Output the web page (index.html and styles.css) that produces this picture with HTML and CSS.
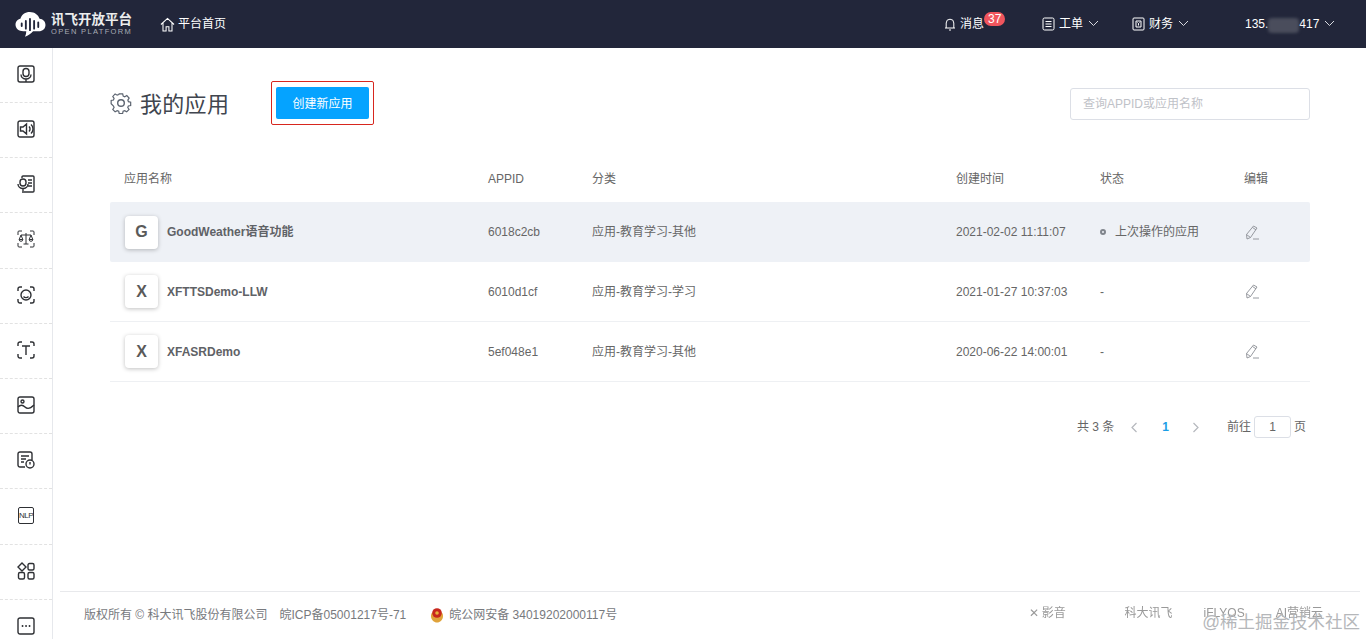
FILE: index.html
```html
<!DOCTYPE html>
<html lang="zh-CN">
<head>
    <meta charset="UTF-8">
    <meta name="viewport" content="width=device-width, initial-scale=1.0">
    <title>我的应用 - 讯飞开放平台</title>
    <link rel="stylesheet" href="styles.css">
</head>
<body>
    <header class="topbar">
        <div class="logo">
            <svg class="logo-icon" width="31" height="27" viewBox="0 0 30 26">
                <path fill="#fff" d="M8 19.500C3.800 19.500 .5 17 .5 13.300c0-3 2.100-5.300 4.700-5.800C6.300 3.300 10 .8 14.300.8c4.600 0 8.300 2.700 9.500 6.700 3.300.2 5.700 2.700 5.700 5.900 0 3.600-2.800 6.100-6.500 6.100h-5.500c-2.200 2.500-4.800 4.300-7.800 5.300.8-1.700 1.200-3.500 1.200-5.300z"/>
                <g stroke="#22263a" stroke-width="1.800" stroke-linecap="round">
                    <path d="M6.500 12v2.500M10.500 9.500v7.500M14.500 7.500v11M18.500 9.500v7.500M22.500 11v4.500"/>
                </g>
            </svg>
            <div class="logo-text">
                <div class="logo-cn">讯飞开放平台</div>
                <div class="logo-en">OPEN PLATFORM</div>
            </div>
        </div>
        <a class="nav-home">
            <svg width="15" height="15" viewBox="0 0 16 16" fill="none" stroke="#fff" stroke-width="1.100">
                <path d="M1 8l7-6.500L15 8M3.200 6.500V15h3.300v-4.500h3V15h3.300V6.500"/>
            </svg>
            平台首页
        </a>
        <div class="nav-right">
            <a class="nav-item nav-msg">
                <svg width="12" height="14" viewBox="0 0 12 14" fill="none" stroke="#fff" stroke-width="1">
                    <path d="M1 11h10M2.200 11V6a3.800 3.800 0 0 1 7.600 0v5M5 13h2"/>
                </svg>
                消息
                <span class="badge">37</span>
            </a>
            <a class="nav-item nav-order">
                <svg width="13" height="14" viewBox="0 0 13 14" fill="none" stroke="#fff" stroke-width="1">
                    <rect x="1" y="1" width="11" height="12" rx="1.500"/>
                    <path d="M3.500 4.500h6M3.500 7h6M3.500 9.500h6"/>
                </svg>
                工单
                <svg class="caret" width="11" height="7" viewBox="0 0 11 7"><path d="M1 1l4.500 4.500L10 1"/></svg>
            </a>
            <a class="nav-item nav-money">
                <svg width="13" height="14" viewBox="0 0 13 14" fill="none" stroke="#fff" stroke-width="1">
                    <rect x="1" y="1" width="11" height="12" rx="1"/>
                    <path d="M4 4h5v6H4z"/>
                    <path d="M5.500 5.500l1 1 1-1M6.500 6.500v2"/>
                </svg>
                财务
                <svg class="caret" width="11" height="7" viewBox="0 0 11 7"><path d="M1 1l4.500 4.500L10 1"/></svg>
            </a>
            <a class="nav-item nav-user">
                <span>135.</span><span class="mask"></span><span>417</span>
                <svg class="caret" width="11" height="7" viewBox="0 0 11 7"><path d="M1 1l4.500 4.500L10 1"/></svg>
            </a>
        </div>
    </header>

    <div class="layout">
        <aside class="sidebar">
            <a class="side-item">
                <svg class="side-icon" viewBox="0 0 18 18">
                    <path d="M1 6V3a2 2 0 0 1 2-2h12a2 2 0 0 1 2 2v3M1 12v3a2 2 0 0 0 2 2h12a2 2 0 0 0 2-2v-3M1 6v6M17 6v6"/>
                    <rect x="6" y="3.500" width="6" height="8" rx="3"/>
                    <path d="M4 9.500a5 4.500 0 0 0 10 0M9 14v3"/>
                </svg>
            </a>
            <a class="side-item">
                <svg class="side-icon" viewBox="0 0 18 18">
                    <rect x="1" y="1" width="16" height="16" rx="2"/>
                    <path d="M3.500 7v4h2.500l3.500 3V4L6 7zM12 6.500a3.500 3.500 0 0 1 0 5M14 4.500a6 6 0 0 1 0 9"/>
                </svg>
            </a>
            <a class="side-item">
                <svg class="side-icon" viewBox="0 0 18 18">
                    <path d="M5 3V2a1 1 0 0 1 1-1h10a1 1 0 0 1 1 1v14a1 1 0 0 1-1 1H5M11 5h4M11 8h4M11 11h4"/>
                    <rect x="3" y="4" width="6" height="7" rx="3"/>
                    <path d="M1 9a5 4.500 0 0 0 10 0M6 13.500V16"/>
                </svg>
            </a>
            <a class="side-item">
                <svg class="side-icon side-thin" viewBox="0 0 18 18">
                    <path d="M1 5V2a1 1 0 0 1 1-1h3M13 1h3a1 1 0 0 1 1 1v3M17 13v3a1 1 0 0 1-1 1h-3M5 17H2a1 1 0 0 1-1-1v-3"/>
                    <path d="M9 3v11M6.500 14h5M4 5h10M4 5l-1.800 4.500h3.600zM14 5l-1.800 4.500h3.600z"/>
                    <path d="M2.200 9.500a1.800 1.800 0 0 0 3.600 0M12.200 9.500a1.800 1.800 0 0 0 3.600 0"/>
                </svg>
            </a>
            <a class="side-item">
                <svg class="side-icon" viewBox="0 0 18 18">
                    <path d="M1 5V3a2 2 0 0 1 2-2h2M13 1h2a2 2 0 0 1 2 2v2M17 13v2a2 2 0 0 1-2 2h-2M5 17H3a2 2 0 0 1-2-2v-2"/>
                    <circle cx="9" cy="9" r="5"/>
                    <path d="M6.800 7.500h.1M11.100 7.500h.1M6.500 10.500c1.200 1.500 3.800 1.500 5 0"/>
                </svg>
            </a>
            <a class="side-item">
                <svg class="side-icon" viewBox="0 0 18 18">
                    <path d="M1 5V3a2 2 0 0 1 2-2h2M13 1h2a2 2 0 0 1 2 2v2M17 13v2a2 2 0 0 1-2 2h-2M5 17H3a2 2 0 0 1-2-2v-2"/>
                    <path d="M5 5h8M9 5v9"/>
                </svg>
            </a>
            <a class="side-item">
                <svg class="side-icon" viewBox="0 0 18 18">
                    <rect x="1" y="1" width="16" height="16" rx="2"/>
                    <circle cx="5.500" cy="5.500" r="1.500"/>
                    <path d="M1 11c3-3 5-2 7 0s5 2 9-2"/>
                </svg>
            </a>
            <a class="side-item">
                <svg class="side-icon" viewBox="0 0 18 18">
                    <path d="M8 16H3a2 2 0 0 1-2-2V3a2 2 0 0 1 2-2h10a2 2 0 0 1 2 2v6M4 5h8M4 8h5M4 11h3"/>
                    <circle cx="13" cy="13" r="4"/>
                    <path d="M13 11v2.500M13 15v.1"/>
                </svg>
            </a>
            <a class="side-item">
                <div class="nlp-icon">NLP</div>
            </a>
            <a class="side-item">
                <svg class="side-icon" viewBox="0 0 18 18">
                    <path d="M5 1l4 4-4 4-4-4z"/>
                    <rect x="11" y="1.500" width="6" height="6.500" rx="1.500"/>
                    <rect x="1.500" y="10.500" width="6" height="6.500" rx="1.500"/>
                    <rect x="11" y="10.500" width="6" height="6.500" rx="1.500"/>
                </svg>
            </a>
            <a class="side-item">
                <svg class="side-icon" viewBox="0 0 18 18">
                    <rect x="1" y="1" width="16" height="16" rx="2"/>
                    <path class="dots" d="M5.500 9h.1M9 9h.1M12.500 9h.1"/>
                </svg>
            </a>
        </aside>

        <main class="content">
            <div class="page-head">
                <svg class="gear" width="22" height="22" viewBox="0 0 22 22" fill="none" stroke="#5c6470" stroke-width="1.400">
                    <path d="M9 1.500h4l.6 2.700 1.800.8 2.400-1.400 2.700 2.900-1.500 2.300.7 1.800 2.600.6v3.900l-2.700.6-.7 1.800 1.500 2.300-2.700 2.700-2.400-1.400-1.800.7-.6 2.700H9l-.6-2.700-1.800-.7-2.400 1.400-2.700-2.700 1.500-2.300-.7-1.800L-.4 13V9.300l2.700-.6.700-1.800-1.500-2.300 2.700-2.900 2.400 1.400 1.800-.8z" transform="translate(1.500 .5) scale(.86)"/>
                    <circle cx="11" cy="11" r="3.300"/>
                </svg>
                <h1 class="page-title">我的应用</h1>
                <div class="create-wrap">
                    <button class="create-btn">创建新应用</button>
                </div>
                <input class="search" type="text" placeholder="查询APPID或应用名称">
            </div>

            <div class="table">
                <div class="row head">
                    <div>应用名称</div>
                    <div>APPID</div>
                    <div>分类</div>
                    <div>创建时间</div>
                    <div>状态</div>
                    <div>编辑</div>
                </div>
                <div class="row active">
                    <div class="app-name"><span class="app-letter">G</span>GoodWeather语音功能</div>
                    <div>6018c2cb</div>
                    <div>应用-教育学习-其他</div>
                    <div>2021-02-02 11:11:07</div>
                    <div class="status"><i class="dot"></i>上次操作的应用</div>
                    <div>
                        <svg class="edit" width="15" height="15" viewBox="0 0 15 15"><path d="M2 14l-.5-4.500L8.500 1 12 3 5.500 12.500zM1.500 9.500l4 3M7.500 2.500l3.500 2.300M8 14h6"/></svg>
                    </div>
                </div>
                <div class="row">
                    <div class="app-name"><span class="app-letter">X</span>XFTTSDemo-LLW</div>
                    <div>6010d1cf</div>
                    <div>应用-教育学习-学习</div>
                    <div>2021-01-27 10:37:03</div>
                    <div>-</div>
                    <div>
                        <svg class="edit" width="15" height="15" viewBox="0 0 15 15"><path d="M2 14l-.5-4.500L8.500 1 12 3 5.500 12.500zM1.500 9.500l4 3M7.500 2.500l3.500 2.300M8 14h6"/></svg>
                    </div>
                </div>
                <div class="row">
                    <div class="app-name"><span class="app-letter">X</span>XFASRDemo</div>
                    <div>5ef048e1</div>
                    <div>应用-教育学习-其他</div>
                    <div>2020-06-22 14:00:01</div>
                    <div>-</div>
                    <div>
                        <svg class="edit" width="15" height="15" viewBox="0 0 15 15"><path d="M2 14l-.5-4.500L8.500 1 12 3 5.500 12.500zM1.500 9.500l4 3M7.500 2.500l3.500 2.300M8 14h6"/></svg>
                    </div>
                </div>
            </div>

            <div class="pager">
                <span class="total">共 3 条</span>
                <svg class="pager-arrow" width="8" height="11" viewBox="0 0 8 11"><path d="M6.500 1L2 5.500 6.500 10"/></svg>
                <span class="page-num">1</span>
                <svg class="pager-arrow" width="8" height="11" viewBox="0 0 8 11"><path d="M1.500 1L6 5.500 1.500 10"/></svg>
                <span class="goto">前往</span>
                <span class="page-input">1</span>
                <span>页</span>
            </div>

            <footer class="footer">
                <span>版权所有 © 科大讯飞股份有限公司</span>
                <span class="icp">皖ICP备05001217号-71</span>
                <svg class="police" width="14" height="16" viewBox="0 0 14 16">
                    <path fill="#e0a33a" d="M1 9c0 4 3 6.500 6 6.500S13 13 13 9 11 5 7 5 1 5 1 9z"/>
                    <circle cx="7" cy="6" r="4.800" fill="#c8281e"/>
                    <circle cx="7" cy="6" r="1.800" fill="#e8b23c"/>
                </svg>
                <span class="beian">皖公网安备 34019202000117号</span>
                <div class="footer-links">
                    <span class="flink-logo">✕ 影音</span>
                    <span>科大讯飞</span>
                    <span>iFLYOS</span>
                    <span>AI营销云</span>
                </div>
            </footer>
        </main>
    </div>

    <div class="watermark">@稀土掘金技术社区</div>
</body>
</html>
```

FILE: styles.css
```css
* {
    margin: 0;
    padding: 0;
    box-sizing: border-box;
    font-family: "Liberation Sans", "Noto Sans CJK SC", sans-serif;
}

body {
    width: 100%;
    height: 639px;
    overflow: hidden;
    background: #fff;
    color: #5f6266;
    font-size: 12px;
}

/* top bar */
.topbar {
    display: flex;
    align-items: center;
    height: 48px;
    padding-left: 15px;
    background: #22263a;
    color: #fff;
    line-height: 16px;
}

.logo {
    display: flex;
    align-items: center;
    width: 145px;
}

.logo-icon {
    margin-right: 5px;
}

.logo-cn {
    font-size: 13.500px;
    line-height: 14px;
    font-weight: bold;
    color: #eceded;
}

.logo-en {
    font-size: 7.500px;
    line-height: 9px;
    letter-spacing: 1.350px;
    color: #a9acb5;
}

.nav-home {
    display: flex;
    align-items: center;
    gap: 3px;
    font-size: 12px;
}

.nav-right {
    display: flex;
    align-items: center;
    margin-left: auto;
    margin-bottom: 1px;
}

.nav-item {
    display: flex;
    align-items: center;
    font-size: 12px;
}

.nav-item svg:first-child {
    margin-right: 4px;
}

.nav-msg {
    position: relative;
    width: 98px;
}

.badge {
    position: absolute;
    left: 40px;
    top: -4px;
    padding: 0 4px;
    border-radius: 7px;
    background: #f0555d;
    font-size: 12px;
    line-height: 14px;
    height: 14px;
}

.nav-order {
    width: 90px;
}

.nav-money {
    width: 113px;
}

.nav-user {
    width: 121px;
}

.caret {
    margin-left: 5px;
    fill: none;
    stroke: #d8dae0;
    stroke-width: 1;
}

.mask {
    display: inline-block;
    width: 31px;
    height: 15px;
    margin-top: 4px;
    border-radius: 4px;
    background: #4a4d5c;
    filter: blur(1.500px);
}

/* sidebar + content */
.layout {
    display: flex;
    height: 591px;
    overflow: hidden;
}

.sidebar {
    flex: 0 0 53px;
    border-right: 1px solid #e6e8ec;
}

.side-item {
    display: flex;
    align-items: center;
    justify-content: center;
    height: 55.200px;
    padding-bottom: 2px;
    border-bottom: 1px dashed #e2e2e2;
}

.side-item:first-child {
    height: 55px;
}

.side-item:last-child {
    border-bottom: none;
}

.side-icon {
    width: 18px;
    height: 18px;
    fill: none;
    stroke: #2e3034;
    stroke-width: 1.400;
}

.side-thin {
    stroke-width: 1;
}

.dots {
    stroke-width: 1.800;
    stroke-linecap: round;
}

.nlp-icon {
    width: 16px;
    height: 17px;
    border: 1px solid #2e3034;
    border-radius: 2px;
    font-size: 8px;
    line-height: 15px;
    text-align: center;
    letter-spacing: -.5px;
    color: #2e3034;
}

.content {
    display: flex;
    flex-direction: column;
    flex: 1;
    padding: 32px 56px 0 57px;
}

.page-head {
    display: flex;
    align-items: center;
    height: 48px;
}

.gear {
    margin-right: 8px;
    margin-bottom: 3px;
}

.page-title {
    width: 131px;
    padding-top: 2px;
    font-size: 22px;
    line-height: 30px;
    letter-spacing: .3px;
    font-weight: normal;
    color: #41464f;
}

.create-wrap {
    align-self: flex-start;
    margin-top: 1px;
    padding: 5px 4px;
    border: 1px solid #d7261e;
    border-radius: 2px;
}

.create-btn {
    display: block;
    width: 93px;
    height: 32px;
    padding-bottom: 2px;
    border: none;
    border-radius: 2px;
    background: #05a3ff;
    color: #fff;
    font-size: 12px;
}

.search {
    width: 240px;
    height: 32px;
    margin-left: auto;
    padding: 0 12px;
    border: 1px solid #dcdfe6;
    border-radius: 3px;
    font-size: 12px;
    outline: none;
}

.search::placeholder {
    color: #bfc2c8;
}

/* app table */
.table {
    margin-top: 26px;
}

.row {
    display: grid;
    grid-template-columns: 364px 104px 364px 144px 144px 1fr;
    align-items: center;
    height: 60px;
    padding-left: 14px;
    border-bottom: 1px solid #eef0f3;
    color: #666;
    font-size: 12px;
    line-height: 16px;
}

.row.head {
    height: 48px;
    padding-top: 2px;
    border-bottom: none;
    color: #666;
}

.row.active {
    background: #eef1f6;
    border-radius: 2px;
    border-bottom: none;
}

.app-name {
    display: flex;
    align-items: center;
    font-weight: bold;
    color: #5f6266;
}

.app-letter {
    display: flex;
    align-items: center;
    justify-content: center;
    width: 33px;
    height: 33px;
    margin: 0 9px 0 1px;
    border-radius: 4px;
    background: #fff;
    box-shadow: 0 1px 4px rgba(0, 0, 0, .25);
    font-size: 16px;
    color: #5a5a5a;
}

.status {
    display: flex;
    align-items: center;
}

.dot {
    width: 6px;
    height: 6px;
    margin-right: 9px;
    border: 2px solid #80858c;
    border-radius: 50%;
}

.edit {
    display: block;
    margin-left: 1px;
    fill: none;
    stroke: #8b8f95;
    stroke-width: .9;
}

/* pagination */
.pager {
    display: flex;
    align-items: center;
    justify-content: flex-end;
    margin-top: 34px;
    padding-right: 4px;
    height: 22px;
    font-size: 12px;
    line-height: 16px;
    color: #666;
}

.pager-arrow {
    fill: none;
    stroke: #b5b8bd;
    stroke-width: 1.200;
}

.total {
    margin-right: 16px;
}

.page-num {
    margin: 0 23px 0 24px;
    font-weight: bold;
    color: #1a9ee6;
}

.goto {
    margin-left: 27px;
    margin-right: 3px;
}

.page-input {
    width: 37px;
    height: 22px;
    margin-right: 3px;
    border: 1px solid #dcdfe6;
    border-radius: 3px;
    line-height: 20px;
    text-align: center;
}

/* footer */
.footer {
    display: flex;
    align-items: center;
    flex: 0 0 48px;
    margin: auto -50px 0 -50px;
    padding: 0 0 2px 24px;
    border-top: 1px solid #e8e9ec;
    color: #77797d;
    font-size: 12px;
    line-height: 16px;
}

.icp {
    margin-left: 12px;
}

.police {
    margin-left: 24px;
    margin-right: 5px;
}

.footer-links {
    display: flex;
    gap: 31px;
    margin-left: auto;
    margin-right: 37px;
    margin-bottom: 4px;
    filter: blur(.6px);
    color: #999;
}

.flink-logo {
    width: 65px;
}

.watermark {
    position: absolute;
    right: 6px;
    bottom: 6px;
    font-size: 17.500px;
    color: #b5b7ba;
}
```
